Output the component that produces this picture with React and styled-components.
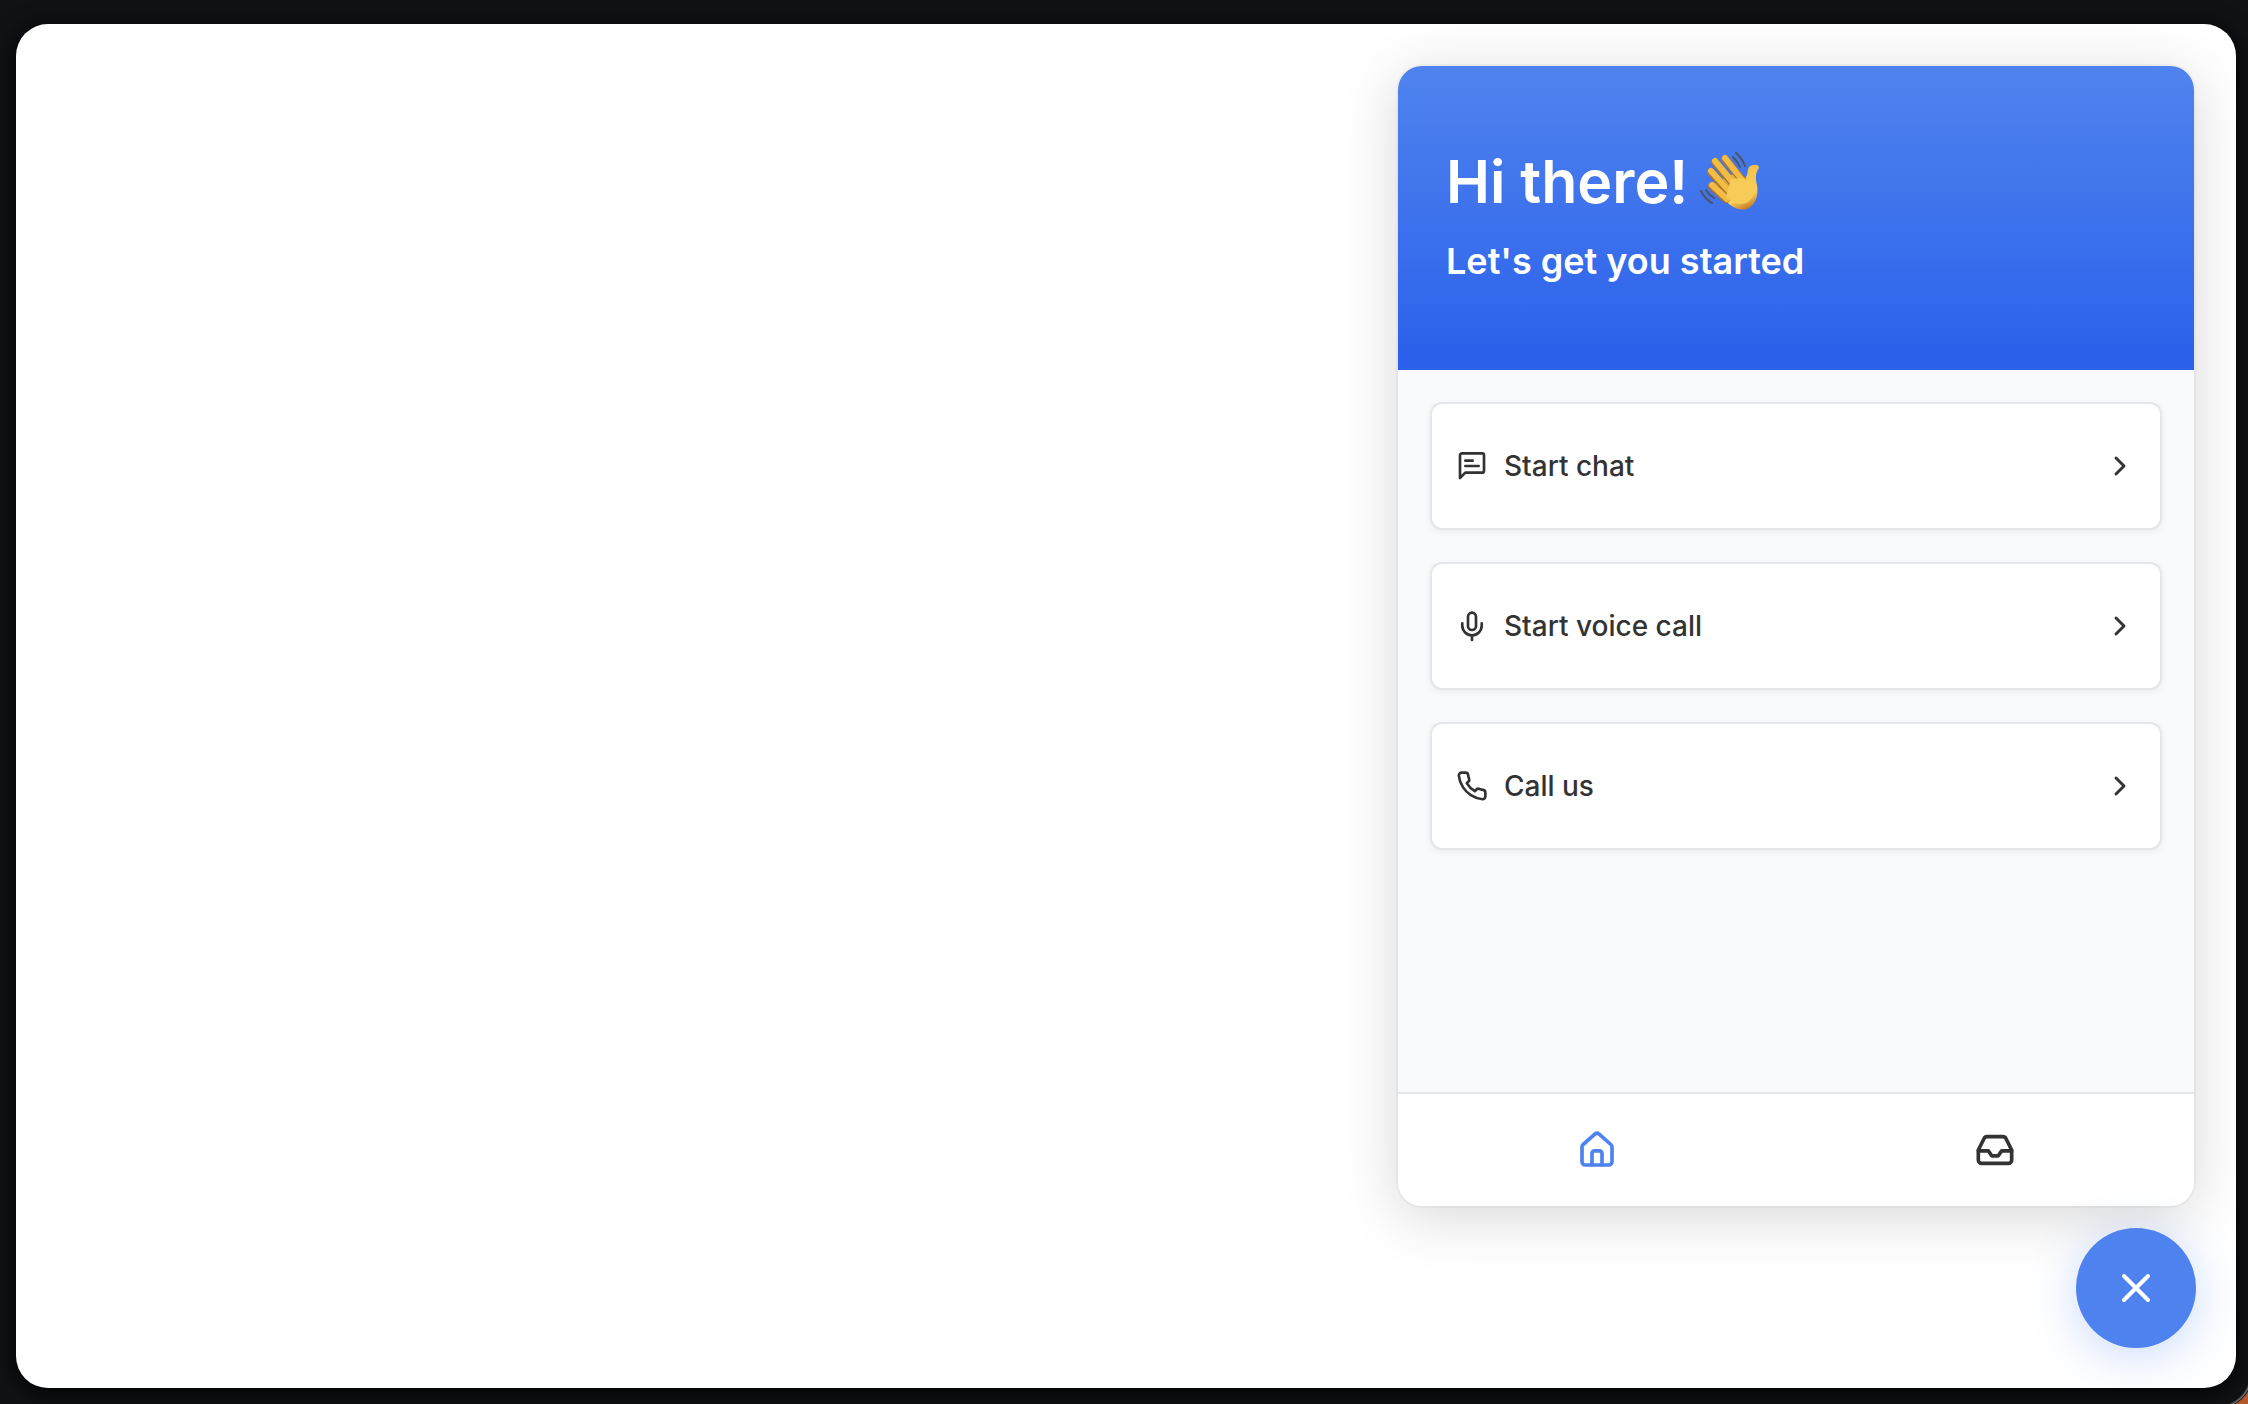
import React from "react";
import styled, { createGlobalStyle } from "styled-components";

const GlobalStyle = createGlobalStyle`
  * { box-sizing: border-box; }
  html, body, #root { height: 100%; }
  body {
    margin: 0;
    background: #101215;
    font-family: Inter, "Liberation Sans", sans-serif;
    color: #333333;
  }
  button { font: inherit; color: inherit; cursor: pointer; }
`;

const Desktop = styled.div`
  height: 100%;
  padding: 24px 12px 16px 16px;
  background: radial-gradient(circle at 0 0, transparent 34px, #75797f 36px, #2a1a14 37px, #b85a2a 38px) right bottom / 32px 32px no-repeat;
`;

const Screen = styled.main`
  height: 100%;
  border-radius: 32px;
  background: #ffffff;
  box-shadow: 0 4px 24px #000000;
  padding: 42px 40px 40px;
  display: flex;
  flex-direction: column;
  align-items: flex-end;
  overflow: hidden;
`;

const Widget = styled.section`
  flex: 1;
  width: 100%;
  max-width: 796px;
  display: flex;
  flex-direction: column;
  border-radius: 24px;
  overflow: hidden;
  margin-right: 2px;
  background: #f9fafc;
  box-shadow: 0 0 0 2px rgba(0, 0, 0, 0.03), 0 10px 60px rgba(0, 0, 0, 0.16);
`;

const Header = styled.header`
  height: 304px;
  padding: 77px 48px 0;
  color: #ffffff;
  background: linear-gradient(180deg, #4e82ee 4%, #2b61eb 97%);
`;

const Title = styled.h1`
  margin: 0;
  display: flex;
  align-items: center;
  gap: 12px;
  font-size: 59px;
  line-height: 78px;
  font-weight: 600;
`;

const Subtitle = styled.p`
  margin: 16px 0 0;
  font-size: 36px;
  line-height: 48px;
  font-weight: 600;
`;

const Actions = styled.div`
  flex: 1;
  padding: 32px;
  display: flex;
  flex-direction: column;
  gap: 32px;
`;

const ActionCard = styled.button`
  height: 128px;
  padding: 0 24px;
  display: flex;
  align-items: center;
  gap: 16px;
  border: 2px solid #e5e6ea;
  border-radius: 12px;
  background: #ffffff;
  box-shadow: 0 2px 6px rgba(0, 0, 0, 0.06);
  font-size: 28px;
  font-weight: 500;
  text-align: left;
`;

const ActionLabel = styled.span`
  flex: 1;
`;

const Nav = styled.nav`
  height: 114px;
  display: grid;
  grid-template-columns: 1fr 1fr;
  border-top: 2px solid #e5e6ea;
  background: #ffffff;
`;

const NavButton = styled.button`
  display: grid;
  place-items: center;
  padding: 0;
  border: 0;
  background: none;
  color: ${(p) => (p.$active ? "#4e82ee" : "#333333")};
`;

const CloseButton = styled.button`
  flex: none;
  width: 120px;
  height: 120px;
  margin-top: 22px;
  display: grid;
  place-items: center;
  padding: 0;
  border: 0;
  border-radius: 50%;
  background: #4e82ee;
  color: #ffffff;
  box-shadow: 0 8px 48px rgba(78, 130, 238, 0.3);
`;

const Icon = ({ size = 32, stroke = 2, children }) => (
  <svg width={size} height={size} viewBox="0 0 24 24" fill="none" stroke="currentColor"
    strokeWidth={stroke} strokeLinecap="round" strokeLinejoin="round" aria-hidden="true">
    {children}
  </svg>
);

const ChatIcon = () => (
  <Icon>
    <path d="M3 21V4A1.500 1.500 0 0 1 4.500 2.500H19.500A1.500 1.500 0 0 1 21 4V15.500A1.500 1.500 0 0 1 19.500 17H7Z" />
    <path d="M7 8H12.500M7 12H17" />
  </Icon>
);

const MicIcon = () => (
  <Icon>
    <rect x="9" y="2" width="6" height="13" rx="3" />
    <path d="M19.300 10v1.700a7.300 7.300 0 0 1-14.600 0V10M12 19V22.500" />
  </Icon>
);

const PhoneIcon = () => (
  <Icon>
    <path d="M22 16.920v3a2 2 0 0 1-2.180 2 19.790 19.790 0 0 1-8.630-3.070 19.500 19.500 0 0 1-6-6A19.790 19.790 0 0 1 2.120 4.180 2 2 0 0 1 4.110 2h3a2 2 0 0 1 2 1.720 12.840 12.840 0 0 0 .7 2.810 2 2 0 0 1-.45 2.110L8.090 9.910a16 16 0 0 0 6 6l1.270-1.270a2 2 0 0 1 2.110-.45 12.840 12.840 0 0 0 2.810.7A2 2 0 0 1 22 16.920Z" />
  </Icon>
);

const ChevronIcon = () => (
  <Icon stroke={2.2}><path d="m9 18 6-6-6-6" /></Icon>
);

const HomeIcon = () => (
  <Icon size={40} stroke={2.2}>
    <path d="M3 10.200a2 2 0 0 1 .7-1.500l7-6.200a2 2 0 0 1 2.600 0l7 6.200a2 2 0 0 1 .7 1.500V19a2 2 0 0 1-2 2H5a2 2 0 0 1-2-2Z" />
    <path d="M9 21v-7a1.500 1.500 0 0 1 1.500-1.500h3A1.500 1.500 0 0 1 15 14v7" />
  </Icon>
);

const InboxIcon = () => (
  <Icon size={40} stroke={2.2}>
    <path d="M22 12.500h-6l-2 3h-4l-2-3H2" />
    <path d="M5.450 5.110 2 12v6a2 2 0 0 0 2 2h16a2 2 0 0 0 2-2v-6l-3.450-6.890A2 2 0 0 0 16.760 4H7.240a2 2 0 0 0-1.790 1.110Z" />
  </Icon>
);

const WaveIcon = () => (
  <svg width="60" height="60" viewBox="0 0 60 60" fill="none" strokeLinecap="round" role="img" aria-label="Waving hand">
    <defs>
      <linearGradient id="palm" x1="22" y1="18" x2="40" y2="59" gradientUnits="userSpaceOnUse">
        <stop offset="0" stopColor="#f3bd45" />
        <stop offset=".75" stopColor="#f8cf5d" />
        <stop offset="1" stopColor="#c9802a" />
      </linearGradient>
    </defs>
    <g stroke="#4e5360" strokeWidth="2">
      <path d="M36 1Q42 6 45 14M33 5Q38 10 40 15M1 39Q5 47 12 51M6 38Q9 43 14 46" />
    </g>
    <path d="M11 34 25 48Q35 60 47 57C58 52 58 40 57 33 55 25 56 20 59 16 59 12 53 12 49 15 47 19 48 24 45 26L42 25 38 20 20 28Z" fill="url(#palm)" />
    <g stroke="#a87630" strokeWidth="8">
      <path d="M12 34 26 47M11 20 29 40M15 10 34 33M25 7 42 28" />
    </g>
    <g stroke="#f3bd45" strokeWidth="6">
      <path d="M12 33 27 47M11 19 30 40M15 9 35 33M25 6 43 29" />
    </g>
    <path d="M31 27 42 26 54 30Q57 43 48 50 38 56 26 45Z" fill="#f7cb57" />
  </svg>
);

const actions = [
  { label: "Start chat", Glyph: ChatIcon },
  { label: "Start voice call", Glyph: MicIcon },
  { label: "Call us", Glyph: PhoneIcon },
];

export default function App() {
  return (
    <>
      <GlobalStyle />
      <Desktop>
        <Screen>
          <Widget>
            <Header>
              <Title>Hi there! <WaveIcon /></Title>
              <Subtitle>Let's get you started</Subtitle>
            </Header>
            <Actions>
              {actions.map(({ label, Glyph }) => (
                <ActionCard key={label} type="button">
                  <Glyph />
                  <ActionLabel>{label}</ActionLabel>
                  <ChevronIcon />
                </ActionCard>
              ))}
            </Actions>
            <Nav>
              <NavButton $active type="button" aria-label="Home"><HomeIcon /></NavButton>
              <NavButton type="button" aria-label="Inbox"><InboxIcon /></NavButton>
            </Nav>
          </Widget>
          <CloseButton type="button" aria-label="Close">
            <Icon size={48} stroke={2}><path d="M18 6 6 18M6 6l12 12" /></Icon>
          </CloseButton>
        </Screen>
      </Desktop>
    </>
  );
}
